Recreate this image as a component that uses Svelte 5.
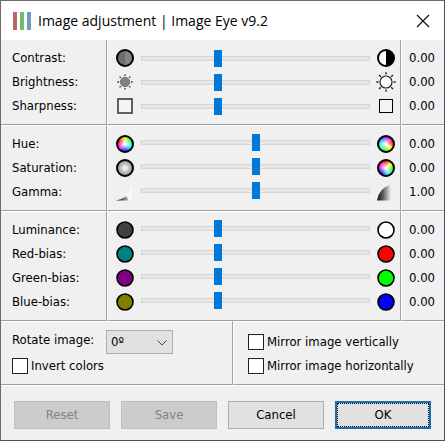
<script lang="ts">
  type Adjustment = {
    id: string;
    label: string;
    value: number;
    text: string;
    low: string;
    high: string;
  };

  let groups = $state<Adjustment[][]>([
    [
      { id: 'contrast', label: 'Contrast:', value: 33, text: '0.00', low: 'half-grey', high: 'half' },
      { id: 'brightness', label: 'Brightness:', value: 33, text: '0.00', low: 'sun-dim', high: 'sun' },
      { id: 'sharpness', label: 'Sharpness:', value: 33, text: '0.00', low: 'square-soft', high: 'square' },
    ],
    [
      { id: 'hue', label: 'Hue:', value: 50, text: '0.00', low: 'wheel-a', high: 'wheel-b' },
      { id: 'saturation', label: 'Saturation:', value: 50, text: '0.00', low: 'wheel-grey', high: 'wheel-c' },
      { id: 'gamma', label: 'Gamma:', value: 50, text: '1.00', low: 'curve-low', high: 'curve-high' },
    ],
    [
      { id: 'luminance', label: 'Luminance:', value: 33, text: '0.00', low: '#404040', high: '#ffffff' },
      { id: 'red', label: 'Red-bias:', value: 33, text: '0.00', low: '#008080', high: '#ff0000' },
      { id: 'green', label: 'Green-bias:', value: 33, text: '0.00', low: '#800080', high: '#00ff00' },
      { id: 'blue', label: 'Blue-bias:', value: 33, text: '0.00', low: '#808000', high: '#0000ff' },
    ],
  ]);

  let rotation = $state('0');
  let invert = $state(false);
  let mirrorV = $state(false);
  let mirrorH = $state(false);

  const rays = [0, 45, 90, 135, 180, 225, 270, 315];
</script>

{#snippet icon(name: string)}
  {#if name.startsWith('wheel')}
    <span class="wheel {name}"></span>
  {:else}
    <svg class="icon" width="20" height="20" viewBox="0 0 20 20" aria-hidden="true">
      {#if name === 'half-grey'}
        <circle cx="10" cy="10" r="8" fill="#6c6c6c" />
        <path d="M10 2a8 8 0 0 1 0 16z" fill="#848484" />
        <circle cx="10" cy="10" r="8" fill="none" stroke="#000" stroke-width="2" />
      {:else if name === 'half'}
        <circle cx="10" cy="10" r="8" fill="#fff" stroke="#000" stroke-width="2" />
        <path d="M10 2a8 8 0 0 1 0 16z" />
      {:else if name === 'sun-dim'}
        <circle cx="10" cy="10" r="4.7" fill="#808080" stroke="#666" stroke-width="0.8" />
        {#each rays as a}
          <path d="M10 4V2.4" stroke="#333" stroke-width="1.3" transform="rotate({a} 10 10)" />
        {/each}
      {:else if name === 'sun'}
        <circle cx="10" cy="10" r="6" fill="#fff" stroke="#222" stroke-width="1.2" />
        {#each rays as a}
          <path d="M10 2.6V0.2" stroke="#222" stroke-width="1.4" transform="rotate({a} 10 10)" />
        {/each}
      {:else if name === 'square-soft'}
        <rect x="3" y="3" width="14" height="14" fill="#f4f4f4" stroke="#505050" stroke-width="1.8" />
      {:else if name === 'square'}
        <rect x="3.5" y="3.5" width="13" height="13" fill="#f4f4f4" stroke="#000" />
      {:else if name === 'curve-low'}
        <path d="M1 18.5Q11 17 16.5 8V18.5z" fill="url(#ramp)" />
        <path d="M11 13.5Q15.5 9 17 2V18.5H14z" fill="#f8f8f8" />
      {:else if name === 'curve-high'}
        <path d="M1 18.5Q3 6 15 2.5V18.5z" fill="url(#ramp)" />
      {:else}
        <circle cx="10" cy="10" r="8" fill={name} stroke="#000" stroke-width="1.6" />
      {/if}
    </svg>
  {/if}
{/snippet}

<svg class="defs" width="0" height="0" aria-hidden="true">
  <linearGradient id="ramp">
    <stop offset="0" stop-color="#111" />
    <stop offset="0.4" stop-color="#555" />
    <stop offset="1" stop-color="#f0f0f0" />
  </linearGradient>
</svg>

<main class="window">
  <header class="titlebar">
    <svg width="18" height="18" viewBox="0 0 18 18" aria-hidden="true">
      <path d="M0 0h4v18H0z" fill="#b5686c" />
      <path d="M7 0h4v18H7z" fill="#70be68" />
      <path d="M14 0h4v18h-4z" fill="#6ba0b8" />
    </svg>
    <h1>Image adjustment | Image Eye v9.2</h1>
    <button class="close" aria-label="Close">
      <svg width="14" height="14" viewBox="0 0 14 14" aria-hidden="true">
        <path d="M1 1l12 12M13 1L1 13" stroke="#111" stroke-width="1.2" />
      </svg>
    </button>
  </header>

  {#each groups as group, i}
    <section class="group" class:raised={i > 0}>
      <div class="cell labels">
        {#each group as item}
          <label class="row" for={item.id}>{item.label}</label>
        {/each}
      </div>
      <div class="cell sliders">
        {#each group as item}
          <div class="row">
            {@render icon(item.low)}
            <input type="range" id={item.id} min="0" max="100" bind:value={item.value} />
            {@render icon(item.high)}
          </div>
        {/each}
      </div>
      <div class="cell values">
        {#each group as item}
          <output class="row" for={item.id}>{item.text}</output>
        {/each}
      </div>
    </section>
  {/each}

  <section class="options">
    <div class="cell left">
      <div class="rotate">
        <label for="rotate">Rotate image:</label>
        <div class="select">
          <select id="rotate" bind:value={rotation}>
            <option value="0">0º</option>
            <option value="90">90º</option>
            <option value="180">180º</option>
            <option value="270">270º</option>
          </select>
          <svg class="chevron" width="10" height="6" viewBox="0 0 10 6" aria-hidden="true">
            <path d="M0.5 0.5L5 5L9.5 0.5" fill="none" stroke="#444" />
          </svg>
        </div>
      </div>
      <label class="check"><input type="checkbox" bind:checked={invert} />Invert colors</label>
    </div>
    <div class="cell right">
      <label class="check"><input type="checkbox" bind:checked={mirrorV} />Mirror image vertically</label>
      <label class="check"><input type="checkbox" bind:checked={mirrorH} />Mirror image horizontally</label>
    </div>
  </section>

  <footer class="actions">
    <button disabled>Reset</button>
    <button disabled>Save</button>
    <button>Cancel</button>
    <button class="default">OK</button>
  </footer>
</main>

<style>
  :global(body) {
    margin: 0;
    background: #f0f0f0;
  }

  .defs {
    position: absolute;
  }

  .window {
    box-sizing: border-box;
    border: 1px solid #6e6a6c;
    border-right-color: #44506a;
    border-bottom-color: #44506a;
    background: #f0f0f0;
    color: #000;
    font-family: "DejaVu Sans Condensed", "DejaVu Sans", sans-serif;
    font-size: 13px;
    line-height: 16px;
  }

  /* Title bar */
  .titlebar {
    display: flex;
    align-items: center;
    height: 39px;
    padding: 0 14px 0 12px;
    background: #fff;
  }

  h1 {
    flex: 1;
    margin: 0 0 0 7px;
    font-family: "Open Sans", sans-serif;
    font-size: 14px;
    font-weight: 400;
    line-height: 20px;
    white-space: nowrap;
  }

  .close {
    display: flex;
    padding: 0;
    border: 0;
    background: none;
  }

  /* Etched lines between the cells */
  .cell {
    border-bottom: 1px solid #a0a0a0;
    border-top: 1px solid #fff;
    border-left: 1px solid #fff;
  }

  .cell:first-child {
    border-left: 0;
  }

  .cell:not(:last-child) {
    border-right: 1px solid #a0a0a0;
  }

  /* Slider groups */
  .group {
    display: grid;
    grid-template-columns: 106px 1fr 43px;
  }

  .group .cell {
    padding: 6px 0;
  }

  .group:not(.raised) .cell {
    border-top: 0;
  }

  .row {
    display: flex;
    align-items: center;
    height: 24px;
  }

  .labels .row {
    padding-left: 11px;
  }

  .values .row {
    padding-left: 7px;
  }

  .sliders .row {
    gap: 6px;
    padding: 0 4px 0 7px;
  }

  .icon,
  .wheel {
    flex: none;
  }

  .wheel {
    box-sizing: border-box;
    width: 18px;
    height: 18px;
    margin: 1px;
    border: 2px solid #000;
    border-radius: 50%;
    background-origin: border-box;
  }

  .wheel-a {
    background-image: radial-gradient(#fff 5%, transparent 60%),
      conic-gradient(#cf0, #0f0 50deg, #0ff 110deg, #00f 180deg, #f0f 240deg, #f00 300deg, #cf0);
  }

  .wheel-b {
    background-image: radial-gradient(#fff 5%, transparent 60%),
      conic-gradient(#a0f, #f06 50deg, #f00 80deg, #ff0 130deg, #0f0 200deg, #0ff 270deg, #06f 320deg, #a0f);
  }

  .wheel-c {
    background-image: radial-gradient(#fff 5%, transparent 60%),
      conic-gradient(#f00, #ff0 50deg, #0f0 100deg, #0ff 160deg, #00f 220deg, #f0f 280deg, #f00);
  }

  .wheel-grey {
    background-image: radial-gradient(#f4f4f4 5%, #808080 70%);
  }

  input[type="range"] {
    appearance: none;
    flex: 1;
    min-width: 0;
    height: 18px;
    margin: 0;
    background: none;
  }

  .raised input[type="range"] {
    margin-bottom: 4px;
  }

  input[type="range"]::-webkit-slider-runnable-track {
    box-sizing: border-box;
    height: 5px;
    border: 1px solid #d6d6d6;
    background: #e7e7e7;
  }

  input[type="range"]::-webkit-slider-thumb {
    appearance: none;
    width: 8px;
    height: 17px;
    margin-top: -7px;
    background: #0078d7;
  }

  /* Options */
  .options {
    display: grid;
    grid-template-columns: 232fr 211fr;
  }

  .options .left {
    padding: 8px 11px 6px;
  }

  .options .right {
    padding: 8px 14px 6px;
  }

  .rotate {
    display: flex;
    justify-content: space-between;
    width: 161px;
    height: 24px;
  }

  .rotate label {
    padding-top: 2px;
  }

  .select {
    position: relative;
    width: 67px;
  }

  select {
    appearance: none;
    box-sizing: border-box;
    width: 100%;
    height: 24px;
    padding: 0 4px;
    border: 1px solid #adadad;
    border-radius: 0;
    background: #e1e1e1;
    color: #000;
    font: inherit;
  }

  .chevron {
    position: absolute;
    right: 6px;
    top: 10px;
    pointer-events: none;
  }

  .check {
    display: flex;
    align-items: center;
    gap: 3px;
    height: 24px;
    white-space: nowrap;
  }

  input[type="checkbox"] {
    appearance: none;
    box-sizing: border-box;
    width: 16px;
    height: 16px;
    margin: 0;
    border: 1px solid #222;
    background: #fff;
  }

  input[type="checkbox"]:checked {
    background: #0078d7;
  }

  /* Buttons */
  .actions {
    display: grid;
    grid-template-columns: repeat(4, 1fr);
    gap: 11px;
    padding: 15px 13px 11px;
    border-top: 1px solid #fff;
  }

  .actions button {
    height: 28px;
    padding: 0;
    border: 1px solid #adadad;
    background: #e1e1e1;
    color: #000;
    font: inherit;
  }

  .actions button:disabled {
    border-color: #bfbfbf;
    background: #ccc;
    color: #838383;
  }

  .actions .default {
    border: 2px solid #1a6fae;
    outline: 1px dotted #000;
    outline-offset: -3px;
  }
</style>
